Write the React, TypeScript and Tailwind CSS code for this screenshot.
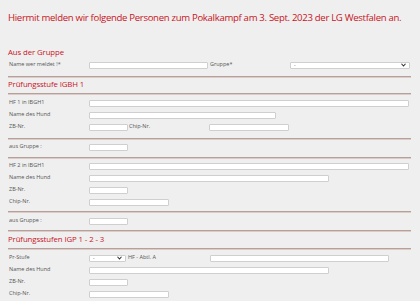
import React from "react";

const Line = () => (
  <div className="w-[403px]">
    <div className="h-px bg-[#b5a09a]" />
    <div className="h-px bg-[#dccbc8]" />
  </div>
);

const Input = ({ w }: { w: number }) => (
  <div
    className="h-[7px] bg-white border border-[#cfcfcf] rounded-[1px] shrink-0"
    style={{ width: w }}
  />
);

const Label = ({ children, w = 81 }: { children: React.ReactNode; w?: number }) => (
  <div className="shrink-0 pl-px text-[5.5px] text-[#555] leading-none" style={{ width: w }}>
    {children}
  </div>
);

const Row = ({ children }: { children: React.ReactNode }) => (
  <div className="h-[12px] flex items-center">{children}</div>
);

const Select = ({ w }: { w: number }) => (
  <div
    className="h-[7px] bg-white border border-[#cfcfcf] rounded-[1px] shrink-0 flex items-center justify-between px-[3px] text-[5px] text-[#555]"
    style={{ width: w }}
  >
    <span className="leading-none">-</span>
    <svg width="5" height="4" viewBox="0 0 10 8">
      <path d="M1 1.5 L5 6 L9 1.5" stroke="#333" strokeWidth="2.2" fill="none" />
    </svg>
  </div>
);

const Heading = ({ children }: { children: React.ReactNode }) => (
  <div className="h-[12px] flex items-center text-[7.8px] tracking-[-0.1px] font-medium text-[#c8141e] leading-none">
    {children}
  </div>
);

export default function App() {
  return (
    <div
      className="w-[420px] h-[301px] bg-[#efefef] overflow-hidden pl-[8px]"
      style={{ fontFamily: '"Open Sans", "Noto Sans", sans-serif' }}
    >
      <div className="pt-[11px] h-[25px] text-[9.6px] leading-[14px] font-medium text-[#c8141e] tracking-[-0.32px] whitespace-nowrap">
        Hiermit melden wir folgende Personen zum Pokalkampf am 3. Sept. 2023 der LG Westfalen an.
      </div>
      <div className="mt-[22px]">
        <Heading>Aus der Gruppe</Heading>
      </div>
      <Row>
        <Label>Name wer meldet !*</Label>
        <Input w={119} />
        <div className="w-[82px] pl-[2px] text-[5.5px] text-[#555] leading-none">Gruppe*</div>
        <Select w={120} />
      </Row>
      <div className="mt-[5px]"><Line /></div>
      <div className="mt-px"><Heading>Prüfungsstufe IGBH 1</Heading></div>
      <div className="mt-[2px]"><Line /></div>
      <div className="mt-[2px]">
        <Row>
          <Label>HF 1 in IBGH1</Label>
          <Input w={320} />
        </Row>
        <Row>
          <Label>Name des Hund</Label>
          <Input w={187} />
        </Row>
        <Row>
          <Label>ZB-Nr.</Label>
          <Input w={39} />
          <div className="w-[81px] pl-px text-[5.5px] text-[#555] leading-none">Chip-Nr.</div>
          <Input w={80} />
        </Row>
      </div>
      <div className="mt-[5px]"><Line /></div>
      <div className="mt-px">
        <Row>
          <Label>aus Gruppe :</Label>
          <Input w={39} />
        </Row>
      </div>
      <div className="mt-[4px]"><Line /></div>
      <div className="mt-px">
        <Row>
          <Label>HF 2 in IBGH1</Label>
          <Input w={320} />
        </Row>
        <Row>
          <Label>Name des Hund</Label>
          <Input w={240} />
        </Row>
        <Row>
          <Label>ZB-Nr.</Label>
          <Input w={39} />
        </Row>
        <Row>
          <Label>Chip-Nr.</Label>
          <Input w={80} />
        </Row>
      </div>
      <div className="mt-[3px]"><Line /></div>
      <div className="mt-[2px]">
        <Row>
          <Label>aus Gruppe :</Label>
          <Input w={39} />
        </Row>
      </div>
      <div className="mt-[3px]"><Line /></div>
      <div className="mt-[2px]"><Heading>Prüfungsstufen IGP 1 - 2 - 3</Heading></div>
      <div className="mt-[2px]"><Line /></div>
      <div className="mt-[2px]">
        <Row>
          <Label>Pr-Stufe</Label>
          <Select w={37} />
          <div className="w-[84px] pl-[2px] text-[5.5px] text-[#555] leading-none">HF - Abtl. A</div>
          <Input w={179} />
        </Row>
        <Row>
          <Label>Name des Hund</Label>
          <Input w={240} />
        </Row>
        <Row>
          <Label>ZB-Nr.</Label>
          <Input w={39} />
        </Row>
        <Row>
          <Label>Chip-Nr.</Label>
          <Input w={80} />
        </Row>
      </div>
    </div>
  );
}
